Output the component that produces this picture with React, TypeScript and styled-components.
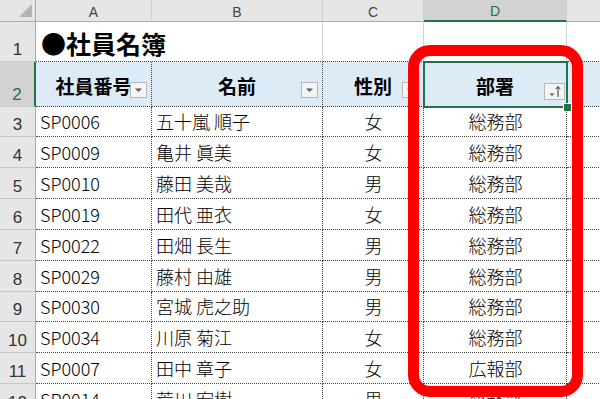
import styled, { createGlobalStyle } from 'styled-components';

const GlobalStyle = createGlobalStyle`
  html, body {
    margin: 0;
    padding: 0;
    background: #ffffff;
    overflow: hidden;
  }
  body {
    width: 600px;
    height: 399px;
    font-family: 'Noto Sans CJK JP', 'Noto Sans', sans-serif;
  }
`;

const Wrapper = styled.div`
  position: relative;
  width: 600px;
  height: 399px;
  overflow: hidden;
`;

const Sheet = styled.div`
  display: grid;
  grid-template-columns: 36px 116px 171px 101px 143px 120px;
  grid-template-rows: 22px 40px 45px 30px 31px 31px 31px 31px 31px 30px 31px 31px 31px;
`;

const Corner = styled.div`
  position: relative;
  background: #e6e6e6;
  border-right: 1px solid #ababab;
  border-bottom: 1px solid #ababab;
  box-sizing: border-box;

  &::after {
    content: '';
    position: absolute;
    right: 3px;
    bottom: 4px;
    border-style: solid;
    border-width: 0 0 13px 13px;
    border-color: transparent transparent #b4b4b4 transparent;
  }
`;

const ColHead = styled.div<{ $active?: boolean }>`
  display: flex;
  align-items: center;
  justify-content: center;
  box-sizing: border-box;
  background: ${({ $active }) => ($active ? '#d2d2d2' : '#e6e6e6')};
  color: ${({ $active }) => ($active ? '#217346' : '#444444')};
  border-right: 1px solid #cfcfcf;
  border-bottom: ${({ $active }) => ($active ? '2px solid #217346' : '1px solid #ababab')};
  font-family: 'Liberation Sans', Arial, sans-serif;
  font-size: 14px;
  padding-top: 2px;
`;

const RowHead = styled.div<{ $active?: boolean }>`
  display: flex;
  align-items: flex-end;
  justify-content: center;
  box-sizing: border-box;
  background: ${({ $active }) => ($active ? '#d2d2d2' : '#e6e6e6')};
  color: ${({ $active }) => ($active ? '#217346' : '#333333')};
  border-right: ${({ $active }) => ($active ? '2px solid #217346' : '1px solid #ababab')};
  border-bottom: 1px solid #c8c8c8;
  font-family: 'Liberation Sans', Arial, sans-serif;
  font-size: 17px;
  padding-bottom: 1px;
`;

const Blank = styled.div`
  box-sizing: border-box;
  border-right: 1px solid #d4d4d4;
  border-bottom: 1px dotted #444444;
`;

const Title = styled.div`
  grid-column: span 2;
  display: flex;
  align-items: center;
  box-sizing: border-box;
  padding: 2px 0 0 5px;
  border-right: 1px solid #d4d4d4;
  border-bottom: 1px dotted #444444;
  font-size: 25px;
  font-weight: 700;
  color: #000000;
  white-space: nowrap;
`;

const HeadCell = styled.div`
  position: relative;
  display: flex;
  align-items: center;
  justify-content: center;
  box-sizing: border-box;
  background: #ddebf7;
  border-right: 1px dotted #444444;
  border-bottom: 1px dotted #444444;
  font-size: 19px;
  font-weight: 700;
  color: #000000;
  padding-top: 2px;
`;

const Cell = styled.div<{ $align?: 'left' | 'center' }>`
  display: flex;
  align-items: flex-end;
  justify-content: ${({ $align }) => ($align === 'center' ? 'center' : 'flex-start')};
  box-sizing: border-box;
  padding: 0 3px 2px 4px;
  border-right: 1px dotted #444444;
  border-bottom: 1px dotted #444444;
  font-size: 18px;
  font-weight: 300;
  line-height: 26px;
  color: #000000;
  white-space: nowrap;
  overflow: hidden;
`;

const FilterButton = styled.div<{ $wide?: boolean }>`
  position: absolute;
  right: ${({ $wide }) => ($wide ? '1px' : '4px')};
  bottom: ${({ $wide }) => ($wide ? '6px' : '8px')};
  width: ${({ $wide }) => ($wide ? '21px' : '17px')};
  height: ${({ $wide }) => ($wide ? '17px' : '16px')};
  box-sizing: border-box;
  background: #f4f4f4;
  border: 1px solid #b8b8b8;
  display: flex;
  align-items: center;
  justify-content: center;
`;

const Selection = styled.div`
  position: absolute;
  left: 423px;
  top: 61px;
  width: 145px;
  height: 47px;
  box-sizing: border-box;
  border: 2px solid #217346;
  pointer-events: none;
`;

const Handle = styled.div`
  position: absolute;
  left: 563px;
  top: 103px;
  width: 7px;
  height: 7px;
  background: #217346;
  border: 1px solid #ffffff;
  box-sizing: content-box;
`;

const RedFrame = styled.div`
  position: absolute;
  left: 408px;
  top: 45px;
  width: 175px;
  height: 352px;
  box-sizing: border-box;
  border: 11px solid #ff0000;
  border-radius: 22px;
  pointer-events: none;
`;

const DropArrow = () => (
  <svg width="9" height="6" viewBox="0 0 9 6">
    <path d="M1 1.5 L8 1.5 L4.5 5 Z" fill="#595959" />
  </svg>
);

const SortArrow = () => (
  <svg width="14" height="13" viewBox="0 0 14 13">
    <path d="M1.5 8.5 L6.5 8.5 L4 11 Z" fill="#595959" />
    <path d="M10 12 L10 2" stroke="#595959" strokeWidth="1.2" />
    <path d="M7.8 4.2 L10 1.5 L12.2 4.2" stroke="#595959" strokeWidth="1.1" fill="none" />
  </svg>
);

const rows = [
  ['SP0006', '五十嵐 順子', '女', '総務部'],
  ['SP0009', '亀井 眞美', '女', '総務部'],
  ['SP0010', '藤田 美哉', '男', '総務部'],
  ['SP0019', '田代 亜衣', '女', '総務部'],
  ['SP0022', '田畑 長生', '男', '総務部'],
  ['SP0029', '藤村 由雄', '男', '総務部'],
  ['SP0030', '宮城 虎之助', '男', '総務部'],
  ['SP0034', '川原 菊江', '女', '総務部'],
  ['SP0007', '田中 章子', '女', '広報部'],
  ['SP0014', '荒川 宏樹', '男', '総務部'],
];

const letters = ['A', 'B', 'C', 'D', 'E'];
const headers = ['社員番号', '名前', '性別', '部署'];

export default function App() {
  return (
    <Wrapper>
      <GlobalStyle />
      <Sheet>
        <Corner />
        {letters.map((l) => (
          <ColHead key={l} $active={l === 'D'}>
            {l}
          </ColHead>
        ))}

        <RowHead>1</RowHead>
        <Title>●社員名簿</Title>
        <Blank />
        <Blank />
        <Blank />

        <RowHead $active>2</RowHead>
        {headers.map((h, i) => (
          <HeadCell key={h}>
            {h}
            <FilterButton $wide={i === 3}>{i === 3 ? <SortArrow /> : <DropArrow />}</FilterButton>
          </HeadCell>
        ))}
        <HeadCell />

        {rows.map((r, i) => (
          <>
            <RowHead key={`h${i}`}>{i + 3}</RowHead>
            <Cell key={`a${i}`}>{r[0]}</Cell>
            <Cell key={`b${i}`}>{r[1]}</Cell>
            <Cell key={`c${i}`} $align="center">
              {r[2]}
            </Cell>
            <Cell key={`d${i}`} $align="center">
              {r[3]}
            </Cell>
            <Cell key={`e${i}`} />
          </>
        ))}
      </Sheet>
      <Selection />
      <Handle />
      <RedFrame />
    </Wrapper>
  );
}
